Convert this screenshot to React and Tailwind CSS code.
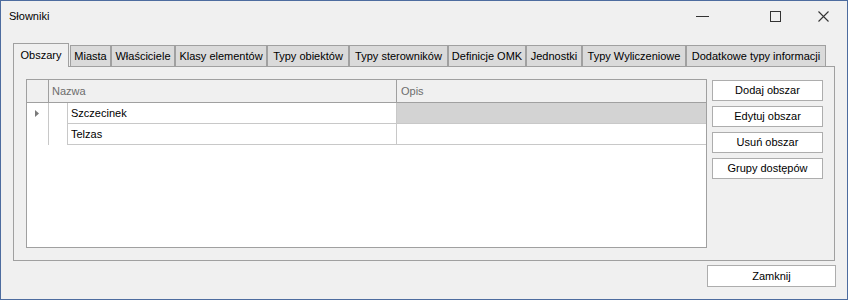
import React from "react";

const tabs = [
  { label: "Obszary", w: 56 },
  { label: "Miasta", w: 41 },
  { label: "Właściciele", w: 64 },
  { label: "Klasy elementów", w: 92 },
  { label: "Typy obiektów", w: 82 },
  { label: "Typy sterowników", w: 99 },
  { label: "Definicje OMK", w: 78 },
  { label: "Jednostki", w: 56 },
  { label: "Typy Wyliczeniowe", w: 104 },
  { label: "Dodatkowe typy informacji", w: 140 },
];

function Btn({ children }) {
  return (
    <button className="w-[111px] h-[21px] bg-white border border-[#adadad] text-[11px] leading-none text-black flex items-center justify-center">
      {children}
    </button>
  );
}

export default function App() {
  return (
    <div
      className="w-[848px] h-[300px] border border-[#4d6c9f] bg-[#f0f0f0] flex flex-col text-[11px] text-black"
      style={{ fontFamily: '"Liberation Sans", Arial, sans-serif' }}
    >
      {/* title bar */}
      <div className="h-[30px] flex items-center">
        <div className="pl-[8px] flex-1 text-[11px]">Słowniki</div>
        <div className="w-[13px] h-px bg-[#333] mr-[61px]" />
        <div className="w-[11px] h-[11px] border border-[#333] mr-[37px]" />
        <svg width="11" height="11" viewBox="0 0 11 11" className="mr-[18px]">
          <path d="M0.5 0.5 L10.5 10.5 M10.5 0.5 L0.5 10.5" stroke="#333" strokeWidth="1.1" />
        </svg>
      </div>

      <div className="pl-[12px] pt-[12px] flex flex-col">
        {/* tab strip */}
        <div className="flex items-end h-[23px] relative z-10">
          {tabs.map((t, i) =>
            i === 0 ? (
              <div
                key={t.label}
                style={{ width: t.w }}
                className="h-[24px] mb-[-1px] bg-[#f0f0f0] border-t border-l border-r border-[#a0a0a0] flex items-center justify-center pb-[1px]"
              >
                {t.label}
              </div>
            ) : (
              <div
                key={t.label}
                style={{ width: t.w }}
                className={`h-[21px] bg-[#dadada] border-t border-l border-r border-[#a0a0a0] flex items-center justify-center ${i === 1 ? "ml-px" : ""}`}
              >
                {t.label}
              </div>
            )
          )}
        </div>

        {/* panel */}
        <div className="w-[822px] h-[195px] border border-[#a0a0a0] bg-[#f0f0f0] pl-[12px] pt-[12px] flex gap-[5px]">
          {/* grid */}
          <div className="w-[681px] h-[169px] border border-[#a0a0a0] bg-white flex flex-col">
            <div className="h-[23px] bg-[#f0f0f0] border-b border-[#a0a0a0] flex text-[#6d6d6d]">
              <div className="w-[22px] border-r border-[#a0a0a0]" />
              <div className="w-[348px] border-r border-[#a0a0a0] flex items-center pl-[3px]">Nazwa</div>
              <div className="flex-1 flex items-center pl-[4px]">Opis</div>
            </div>
            {["Szczecinek", "Telzas"].map((name, i) => (
              <div key={name} className="h-[21px] flex">
                <div className="w-[22px] border-r border-[#c8c8c8] flex items-center justify-center">
                  {i === 0 && (
                    <svg width="4" height="7" viewBox="0 0 4 7" className="ml-[-2px]">
                      <path d="M0 0 L4 3.5 L0 7 Z" fill="#7a7a7a" />
                    </svg>
                  )}
                </div>
                <div className="w-[19px] border-r border-[#c8c8c8]" />
                <div className="w-[329px] border-r border-b border-[#c8c8c8] flex items-center pl-[3px]">{name}</div>
                <div className={`flex-1 border-b border-[#c8c8c8] ${i === 0 ? "bg-[#d3d3d3]" : ""}`} />
              </div>
            ))}
          </div>
          {/* buttons */}
          <div className="flex flex-col gap-[5px] pt-px">
            <Btn>Dodaj obszar</Btn>
            <Btn>Edytuj obszar</Btn>
            <Btn>Usuń obszar</Btn>
            <Btn>Grupy dostępów</Btn>
          </div>
        </div>

        <div className="flex justify-end pr-[11px] pt-[4px]">
          <button className="w-[129px] h-[22px] bg-white border border-[#adadad] flex items-center justify-center leading-none">
            Zamknij
          </button>
        </div>
      </div>
    </div>
  );
}
